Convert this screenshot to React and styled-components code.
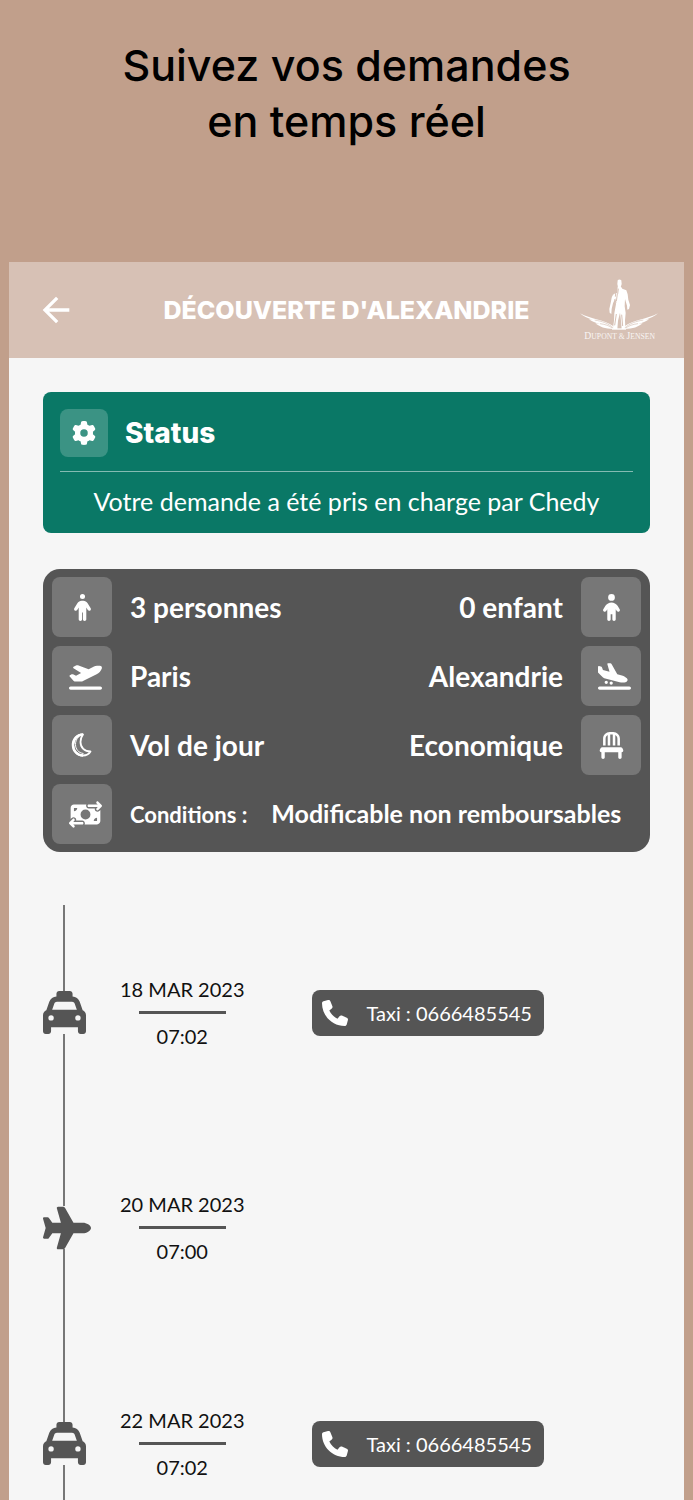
import React from 'react';
import styled, { createGlobalStyle } from 'styled-components';
import {
  FaPerson, FaChild, FaPlaneDeparture, FaPlaneArrival, FaChair,
  FaMoneyBillTransfer, FaTaxi, FaPlane, FaPhone, FaGear,
} from 'react-icons/fa6';
import { MdArrowBack } from 'react-icons/md';

const GlobalStyle = createGlobalStyle`
  *, *::before, *::after { box-sizing: border-box; }
  body { margin: 0; background: #c19f8b; color: #111; font-family: Lato, sans-serif; }
  h1, h2, h3, p, dl, dd, dt, ol { margin: 0; padding: 0; }
`;

const Page = styled.div`
  min-height: 100vh;
  display: flex;
  flex-direction: column;
  padding: 0 9px;
`;

const Headline = styled.h1`
  padding: 37px 0 113px;
  text-align: center;
  font: 500 43px/56px Inter, sans-serif;
  color: #000;
`;

const Screen = styled.main`
  flex: 1;
  display: flex;
  flex-direction: column;
  background: #f6f6f6;
`;

const TopBar = styled.header`
  display: grid;
  grid-template-columns: 80px 1fr 80px;
  align-items: center;
  height: 96px;
  padding: 0 25px;
  background: #d7c1b5;
  color: #fff;
`;

const BackButton = styled.button`
  display: flex;
  width: 44px;
  height: 44px;
  padding: 0;
  align-items: center;
  justify-content: center;
  border: 0;
  background: none;
  color: inherit;
`;

const ScreenTitle = styled.h2`
  text-align: center;
  white-space: nowrap;
  font: 800 25px/32px Inter, sans-serif;
`;

const Content = styled.div`
  flex: 1;
  display: flex;
  flex-direction: column;
  gap: 36px;
  padding: 34px 34px 0;
`;

const StatusCard = styled.section`
  padding: 17px 17px 16px;
  border-radius: 8px;
  background: #0a7866;
  color: #fff;
`;

const StatusHead = styled.div`
  display: flex;
  align-items: center;
  gap: 17px;
  padding-bottom: 14px;
  border-bottom: 1px solid #84bbb2;
`;

const StatusTitle = styled.h3`
  font: 800 28px/32px Inter, sans-serif;
`;

const StatusText = styled.p`
  padding-top: 13px;
  text-align: center;
  font-size: 25px;
  line-height: 32px;
`;

const Tile = styled.span`
  display: flex;
  flex: none;
  align-items: center;
  justify-content: ${(p) => (p.$wide ? 'flex-start' : 'center')};
  padding-left: ${(p) => (p.$wide ? 17 : 0)}px;
  width: ${(p) => p.$size}px;
  height: ${(p) => p.$size}px;
  border-radius: 8px;
  background: ${(p) => (p.$tone === 'green' ? '#3b9384' : '#777')};
`;

const InfoCard = styled.section`
  display: flex;
  flex-direction: column;
  gap: 9px;
  padding: 8px 9px;
  border-radius: 17px;
  background: #555;
  color: #fff;
`;

const InfoRow = styled.div`
  display: flex;
  justify-content: space-between;
`;

const InfoItem = styled.div`
  display: flex;
  align-items: center;
  gap: 18px;
  flex-direction: ${(p) => (p.$end ? 'row-reverse' : 'row')};
  font-size: 28px;
  line-height: 32px;
  font-weight: 700;
  white-space: nowrap;
`;

const Conditions = styled.dl`
  display: flex;
  align-items: baseline;
  gap: 24px;
  font-size: 25px;

  dt { font-size: 22px; }
`;

const Timeline = styled.ol`
  flex: 1;
  display: flex;
  flex-direction: column;
  padding-top: 17px;
  list-style: none;
`;

const Line = styled.li`
  width: 2px;
  height: ${(p) => p.$length}px;
  flex: ${(p) => (p.$last ? '1 0 auto' : 'none')};
  margin-left: 20px;
  background: #777;
`;

const Step = styled.li`
  display: flex;
  align-items: center;
  height: 43px;
  color: #555;
`;

const StepIcon = styled.span`
  display: flex;
  width: 77px;
`;

const When = styled.div`
  display: flex;
  flex-direction: column;
  align-items: center;
  color: #111;
  font-size: 20px;
  line-height: 28px;
  white-space: nowrap;
`;

const Rule = styled.span`
  width: 87px;
  height: 3px;
  margin: 8px 0;
  background: #555;
`;

const CallLink = styled.a`
  display: flex;
  align-items: center;
  gap: 18px;
  height: 46px;
  margin-left: 68px;
  padding: 0 12px 0 10px;
  border-radius: 8px;
  background: #555;
  color: #fff;
  font-size: 20px;
  text-decoration: none;
  white-space: nowrap;
`;

const MoonIcon = () => (
  <svg width="22" height="26" viewBox="0 0 22 26" fill="none" stroke="#fff" strokeLinejoin="round" aria-hidden="true">
    <path d="M12 2.500C6 2.500 2 7.500 2 13c0 6 4.500 10.500 10 10.500 3.300 0 6-1.500 7.500-4C13.500 19.500 9.500 15.500 9.500 10c0-3.300 1-5.500 2.500-7.500Z" strokeWidth="1.800" />
    <path d="M8 4.500C5.500 6.500 4.500 9.500 4.500 12.500c0 4.500 3 8.500 8 9" strokeWidth="1" />
    <path d="M12 2.500C6 2.500 2 7.500 2 13c0 6 4.500 10.500 10 10.500" strokeWidth="2.500" />
  </svg>
);

const Crest = () => (
  <svg width="80" height="66" viewBox="-3 21 240 198" fill="#fff" role="img" aria-label="Dupont & Jensen">
    <path d="M113 31q5-5 11 0l1 11-3 10h-8l-2-10Z" />
    <path d="M113 50l10 0 4 6 12 5 4 12 2 16 5 16-3 12-5 2-1-12-6-20-1 22 3 20-2 22 1 26h-11l-2-24-3-25-6 24-2 25h-9l-4-3 3-22 1-22 5-28-2-17-7 15-4 17-1 15-5-4-1-11 4-18 3-16 4-10 13-5Z" />
    <path d="M108 62l-2 18M101 66l-3 10M112 72l-3 22M115 56l-2 16M104 88l4 10M109 132l-5 34M125 134l3 34" stroke="#d7c1b5" strokeWidth="3" fill="none" />
    <path d="M0 130C30 147 76 150 99 168l6 9C77 178 60 171 46 160l14 2C45 158 33 153 27 147l12 2C23 145 9 138 0 130Z" />
    <path d="M234 130c-30 17-76 20-99 38l-6 9c28 1 45-6 59-17l-14 2c15-4 27-9 33-15l-12 2c16-4 30-11 39-19Z" />
    <path d="M44 150c22 4 40 9 56 24M60 161c16 2 28 6 38 14M190 150c-22 4-40 9-56 24M174 161c-16 2-28 6-38 14" stroke="#d7c1b5" strokeWidth="2" fill="none" />
    <path d="M96 175h42v4H96z" />
    <text x="119" y="207" textAnchor="middle" fontFamily="Liberation Serif, serif" fontSize="23" opacity=".85">
      <tspan fontSize="29">D</tspan>UPONT &amp; <tspan fontSize="29">J</tspan>ENSEN
    </text>
  </svg>
);

const Info = ({ icon: Icon, wide, end, children }) => (
  <InfoItem $end={end}>
    <Tile $size={60} $wide={wide}><Icon size={wide ? 33 : 27} aria-hidden="true" /></Tile>
    {children}
  </InfoItem>
);

const Stop = ({ icon: Icon, size = 43, date, time, phone }) => (
  <Step>
    <StepIcon><Icon size={size} aria-hidden="true" /></StepIcon>
    <When>
      <time>{date}</time>
      <Rule />
      <time>{time}</time>
    </When>
    {phone && (
      <CallLink href={`tel:${phone}`}>
        <FaPhone size={26} aria-hidden="true" />
        Taxi : {phone}
      </CallLink>
    )}
  </Step>
);

export default function App() {
  return (
    <Page>
      <GlobalStyle />
      <Headline>Suivez vos demandes<br />en temps réel</Headline>
      <Screen>
        <TopBar>
          <BackButton type="button" aria-label="Retour"><MdArrowBack size={40} /></BackButton>
          <ScreenTitle>DÉCOUVERTE D'ALEXANDRIE</ScreenTitle>
          <Crest />
        </TopBar>
        <Content>
          <StatusCard>
            <StatusHead>
              <Tile $size={48} $tone="green"><FaGear size={24} aria-hidden="true" /></Tile>
              <StatusTitle>Status</StatusTitle>
            </StatusHead>
            <StatusText>Votre demande a été pris en charge par Chedy</StatusText>
          </StatusCard>
          <InfoCard>
            <InfoRow>
              <Info icon={FaPerson}>3 personnes</Info>
              <Info icon={FaChild} end>0 enfant</Info>
            </InfoRow>
            <InfoRow>
              <Info icon={FaPlaneDeparture} wide>Paris</Info>
              <Info icon={FaPlaneArrival} wide end>Alexandrie</Info>
            </InfoRow>
            <InfoRow>
              <Info icon={MoonIcon}>Vol de jour</Info>
              <Info icon={FaChair} end>Economique</Info>
            </InfoRow>
            <InfoRow>
              <Info icon={FaMoneyBillTransfer} wide>
                <Conditions>
                  <dt>Conditions :</dt>
                  <dd>Modificable non remboursables</dd>
                </Conditions>
              </Info>
            </InfoRow>
          </InfoCard>
          <Timeline>
            <Line $length={86} aria-hidden="true" />
            <Stop icon={FaTaxi} date="18 MAR 2023" time="07:02" phone="0666485545" />
            <Line $length={172} aria-hidden="true" />
            <Stop icon={FaPlane} size={48} date="20 MAR 2023" time="07:00" />
            <Line $length={173} aria-hidden="true" />
            <Stop icon={FaTaxi} date="22 MAR 2023" time="07:02" phone="0666485545" />
            <Line $length={32} $last aria-hidden="true" />
          </Timeline>
        </Content>
      </Screen>
    </Page>
  );
}
